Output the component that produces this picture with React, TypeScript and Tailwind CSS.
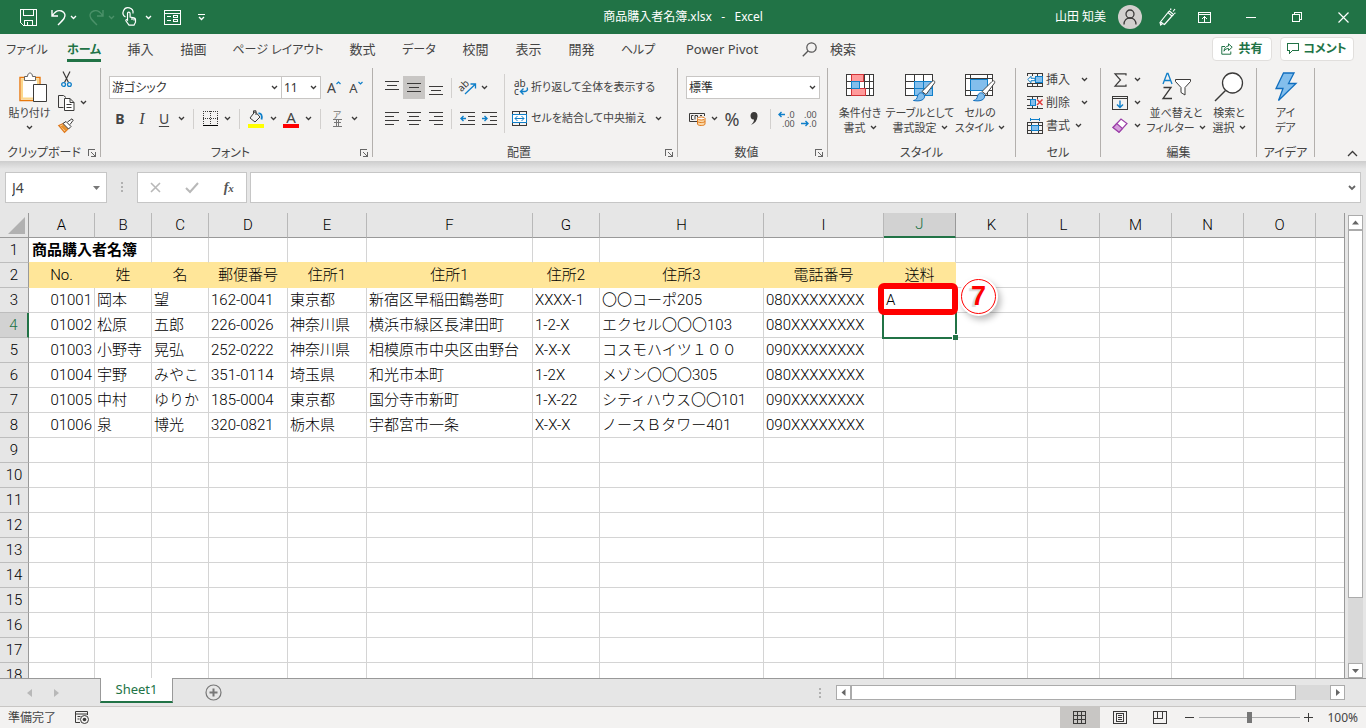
import type { ReactNode } from 'react'
import clsx from 'clsx'

const GREEN = '#217346'
const INK = '#3b3a39'
const BLUE = '#0f7fc9'

interface SvgProps {
  w: number
  h: number
  crisp?: boolean
  stroke?: string
  children: ReactNode
}

function Svg({ w, h, crisp, stroke = INK, children }: SvgProps) {
  return (
    <svg
      width={w}
      height={h}
      viewBox={`0 0 ${w} ${h}`}
      fill="none"
      stroke={stroke}
      shapeRendering={crisp ? 'crispEdges' : 'auto'}
      className="block shrink-0 overflow-visible"
      aria-hidden="true"
    >
      {children}
    </svg>
  )
}

function Chevron({ color = INK }: { color?: string }) {
  return (
    <Svg w={7} h={5} stroke={color}>
      <path d="M1 1l2.5 2.5L6 1" strokeWidth="1.3" />
    </Svg>
  )
}

/* ---------- title bar ---------- */

const SaveIcon = () => (
  <Svg w={17} h={17} crisp stroke="#fff">
    <path d="M.5.5h16v16H3.5l-3-3z M3.5.5v6h10v-6 M4.5 16.5v-5h8v5 M7.5 16v-3" />
  </Svg>
)

const UndoIcon = () => (
  <Svg w={15} h={17} stroke="#fff">
    <path d="M1 1v6h6 M1.5 6.5C4 2.5 7.5 1 10.5 2c3.5 1.3 4.5 4.5 2.5 7.5-1 1.5-3.5 4-6 6.5" strokeWidth="1.4" />
  </Svg>
)

const RedoIcon = () => (
  <Svg w={15} h={17} stroke="#4b9169">
    <path d="M14 1v6H8 M13.5 6.5C11 2.5 7.5 1 4.5 2 1 3.3 0 6.5 2 9.5c1 1.5 3.5 4 6 6.5" strokeWidth="1.4" />
  </Svg>
)

const TouchIcon = () => (
  <Svg w={14} h={18} stroke="#fff">
    <path d="M2.5 9A5 5 0 1 1 10 5.5" strokeWidth="1.2" />
    <path d="M4.5 12V5.5a1.3 1.3 0 0 1 2.6 0V9l4 .8c1 .3 1.4.9 1.4 1.8v2.6L11 17.2H6L3 13c-.6-1 .6-2 1.5-1z M9 10v2 M11 10.5v2" strokeWidth="1.2" />
  </Svg>
)

const FormIcon = () => (
  <Svg w={17} h={15} crisp stroke="#fff">
    <path d="M.5.5h16v14H.5z M.5 3.5h16 M3 6.5h4 M3 10.5h4 M9.5 5.5h4v2h-4z M9.5 9.5h4v2h-4z" />
  </Svg>
)

const CustomizeIcon = () => (
  <Svg w={9} h={8} stroke="#fff">
    <path d="M1 1.5h7" />
    <path d="M2 4l2.5 2.5L7 4" strokeWidth="1.3" />
  </Svg>
)

const PenIcon = () => (
  <Svg w={17} h={18} stroke="#fff">
    <path d="M1 14.5L9 4.5l4 3.5-7.5 8.5-2-1-1.8 1.5z M3.5 15.5L1.5 13.5 M9 4.5l1.5-1.5 4 3.5L13 8 M11.5 2l.5-1.5 M14 3.5l2-2.5 M15 5.5l1.5-.5" strokeWidth="1.2" />
  </Svg>
)

const RibbonDisplayIcon = () => (
  <Svg w={13} h={11} crisp stroke="#fff">
    <path d="M.5.5h12v10H.5z M.5 2.5h12 M6.5 4v6 M4 6.5h1 M8 6.5h1 M5 5.5h3" />
  </Svg>
)

function TitleBar() {
  return (
    <header className="grid h-[34px] shrink-0 grid-cols-[1fr_auto_1fr] items-center bg-[#217346] text-xs text-white">
      <div className="flex items-center pl-5">
        <button aria-label="上書き保存"><SaveIcon /></button>
        <button aria-label="元に戻す" className="ml-3.5"><UndoIcon /></button>
        <button aria-label="元に戻す一覧" className="ml-1"><Chevron color="#fff" /></button>
        <button aria-label="やり直し" className="ml-3"><RedoIcon /></button>
        <button aria-label="やり直し一覧" className="ml-1"><Chevron color="#4b9169" /></button>
        <button aria-label="タッチ" className="ml-2"><TouchIcon /></button>
        <button aria-label="タッチ一覧" className="ml-2"><Chevron color="#fff" /></button>
        <button aria-label="フォーム" className="ml-3"><FormIcon /></button>
        <button aria-label="カスタマイズ" className="ml-4"><CustomizeIcon /></button>
      </div>
      <h1 className="whitespace-pre">商品購入者名簿.xlsx   -   Excel</h1>
      <div className="flex items-center justify-end">
        <span>山田 知美</span>
        <span className="ml-3 flex size-6 items-center justify-center overflow-hidden rounded-full bg-[#d2d0ce]">
          <Svg w={14} h={16}>
            <circle cx="7" cy="5" r="4" strokeWidth="1.3" />
            <path d="M1 15.5c0-4 2.5-6.5 6-6.5s6 2.5 6 6.5" strokeWidth="1.3" />
          </Svg>
        </span>
        <button aria-label="近日公開の機能" className="ml-[17px]"><PenIcon /></button>
        <button aria-label="リボンの表示オプション" className="ml-[22px]"><RibbonDisplayIcon /></button>
        <button aria-label="最小化" className="ml-[17px] flex w-[46px] justify-center">
          <Svg w={10} h={10} crisp stroke="#fff"><path d="M0 5.5h10" /></Svg>
        </button>
        <button aria-label="元に戻す (縮小)" className="flex w-[46px] justify-center">
          <Svg w={10} h={10} crisp stroke="#fff"><path d="M.5 2.5h7v7h-7z M2.5 2V.5h7v7H8" /></Svg>
        </button>
        <button aria-label="閉じる" className="flex w-[46px] justify-center">
          <Svg w={11} h={11} stroke="#fff"><path d="M.5.5l10 10M10.5.5l-10 10" strokeWidth="1.2" /></Svg>
        </button>
      </div>
    </header>
  )
}

/* ---------- tabs ---------- */

const TABS = [
  { label: 'ファイル', width: 'w-[54px] text-xs' },
  { label: 'ホーム', width: 'w-[60px] text-xs', active: true },
  { label: '挿入', width: 'w-[53px]' },
  { label: '描画', width: 'w-[53px]' },
  { label: 'ページ レイアウト', width: 'w-[116px] text-xs' },
  { label: '数式', width: 'w-[53px]' },
  { label: 'データ', width: 'w-[60px] text-xs' },
  { label: '校閲', width: 'w-[53px]' },
  { label: '表示', width: 'w-[53px]' },
  { label: '開発', width: 'w-[53px]' },
  { label: 'ヘルプ', width: 'w-[60px] text-xs' },
  { label: 'Power Pivot', width: 'w-[108px]' },
]

function TabRow() {
  return (
    <nav className="flex h-[33px] shrink-0 items-start text-[13px] text-[#444]">
      {TABS.map(t => (
        <button key={t.label} className={clsx('flex h-7 shrink-0 justify-center', t.width)}>
          <span
            className={clsx(
              'h-7 whitespace-nowrap border-b-[3px] leading-[31px]',
              t.active ? 'border-[#217346] font-bold text-[#217346]' : 'border-transparent'
            )}
          >
            {t.label}
          </span>
        </button>
      ))}
      <button className="ml-[26px] flex h-7 items-center gap-[13px] pt-[3px]">
        <Svg w={15} h={15} stroke="#555">
          <circle cx="9.5" cy="5.5" r="4.7" strokeWidth="1.2" />
          <path d="M6 9L.8 14.3" strokeWidth="1.3" />
        </Svg>
        検索
      </button>
      <div className="ml-auto mr-3 mt-[3px] flex gap-2 text-xs font-bold text-[#217346]">
        <button className="flex h-6 w-[60px] items-center justify-center gap-[5px] rounded-sm border border-[#e1dfdd] bg-white">
          <Svg w={12} h={12} stroke={GREEN}>
            <path d="M4 3.5H.8v7.7h9V8.5 M7.5.8l3.7 3.4-3.7 3.3V5.5C5.5 5.5 4 6.5 3 8.2c.2-3.2 2-5 4.5-5.2z" />
          </Svg>
          共有
        </button>
        <button className="flex h-6 w-[74px] items-center justify-center gap-1 rounded-sm border border-[#e1dfdd] bg-white">
          <Svg w={12} h={12} crisp stroke={GREEN}>
            <path d="M.5.5h11v7h-6l-3 3v-3h-2z" />
          </Svg>
          コメント
        </button>
      </div>
    </nav>
  )
}

/* ---------- ribbon icons ---------- */

const PasteIcon = () => (
  <Svg w={28} h={31}>
    <path d="M1 5.5h20v23H1z" fill="#fff" stroke="#e8780c" strokeWidth="1.4" />
    <path d="M3 7.5h16v19H3z" stroke="#fbd78c" strokeWidth="2" />
    <path d="M5.5 8.5V4.5h3C8.5 2 10 1 11 1s2.500 1 2.500 3.500h3v4z" fill="#fff" stroke="#666" />
    <path d="M14.500 12.500h13v17h-13z" fill="#fff" />
  </Svg>
)

const CutIcon = () => (
  <Svg w={11} h={17}>
    <path d="M2 .5l5.5 11 M9 .5l-5.5 11" strokeWidth="1.2" />
    <circle cx="2.6" cy="13.5" r="1.9" stroke={BLUE} strokeWidth="1.3" />
    <circle cx="8.4" cy="13.5" r="1.9" stroke={BLUE} strokeWidth="1.3" />
  </Svg>
)

const CopyIcon = () => (
  <Svg w={17} h={16}>
    <path d="M5.5 12.5h-5v-12h5l2.5 2" />
    <path d="M6.5 3.5h5.5l4 4v8h-9.5z M12 3.5v4h4 M8.5 9.5h5 M8.5 12.5h5" fill="#fff" />
  </Svg>
)

const BrushIcon = () => (
  <Svg w={16} h={15}>
    <path d="M.8 7.5l4.7-2 5 5-4 3.8z" fill="#fbd9a8" stroke="#e07b1f" strokeWidth="1.3" />
    <path d="M2.500 8.500l5 4.500 2-2-4-4.500z" fill="#e8912d" stroke="none" />
    <path d="M5 5.5l3-2 5 5-2.5 2.5z M9.5 4L14 .8l1.2 1.4L12 6.5" fill="#fff" />
  </Svg>
)

const BorderIcon = () => (
  <Svg w={15} h={15} crisp>
    <path d="M0 .5h15 M.5 0v14 M14.5 0v14 M7.5 0v14 M0 7.5h15" strokeDasharray="1 1" />
    <path d="M0 14.5h15" stroke="#000" />
  </Svg>
)

const FillIcon = () => (
  <Svg w={16} h={18}>
    <path d="M7 1.5L2 8l5 4 5-5z M5.5 4V.8H8V5" />
    <path d="M10.5 3.5c2.5-.5 4 1.5 3 6" stroke={BLUE} strokeWidth="1.8" />
    <path d="M0 14h16v4H0z" fill="#ff0" stroke="none" />
  </Svg>
)

function Lines({ rows }: { rows: [number, number][] }) {
  return (
    <Svg w={14} h={15} crisp>
      {rows.map(([x1, x2], i) => (
        <path key={i} d={`M${x1} ${i * 4 + 1.5}H${x2}`} />
      ))}
    </Svg>
  )
}

function VLines({ top }: { top: number }) {
  return (
    <Svg w={14} h={17} crisp>
      <path d={`M0 ${top + 0.5}h14 M2 ${top + 4.5}h10 M0 ${top + 8.5}h14`} />
    </Svg>
  )
}

const OrientationIcon = () => (
  <Svg w={17} h={17}>
    <path d="M6 15L16 5.5 M11.5 5h5v4.5" stroke={BLUE} strokeWidth="1.3" />
    <text x="0" y="11" fontSize="10" fill={INK} stroke="none" transform="rotate(-45 4 9)">ab</text>
  </Svg>
)

function IndentIcon({ out }: { out?: boolean }) {
  return (
    <Svg w={15} h={14} crisp>
      <path d="M0 .5h15 M8 4.5h7 M8 8.5h7 M0 12.5h15" />
      <path d={out ? 'M1 6.5h5 M3.5 4L1 6.5 3.5 9' : 'M0 6.5h5 M2.5 4L5 6.5 2.5 9'} stroke={BLUE} shapeRendering="auto" strokeWidth="1.4" />
    </Svg>
  )
}

const WrapIcon = () => (
  <Svg w={15} h={17}>
    <text x="0" y="8" fontSize="10" fill={INK} stroke="none">ab</text>
    <text x="0" y="16" fontSize="10" fill={INK} stroke="none">c</text>
    <path d="M13 8.5c1.5 2.5-.5 4-2 4H7 M9.5 9.5l-3 3 3 3" stroke={BLUE} strokeWidth="1.4" />
  </Svg>
)

const MergeIcon = () => (
  <Svg w={15} h={15} crisp>
    <path d="M.5.5h14v14H.5z M7.5 0v3 M7.5 12v3" />
    <path d="M.5 3.5h14v8H.5z" fill="#fff" stroke={BLUE} />
    <path d="M3 7.5h9 M5.5 5L3 7.5 5.5 10 M9.5 5L12 7.5 9.5 10" stroke={BLUE} shapeRendering="auto" />
  </Svg>
)

const CurrencyIcon = () => (
  <Svg w={17} h={14}>
    <path d="M8 9.5H.5v-8h15V4 M4.5 3.5h-2v4h2 M6 7.5v-4h2.5v2 M13 3.5h-2" />
    <path d="M8.5 6.5V12c0 2 7.5 2 7.5 0V6.5" fill="#fbd9a8" stroke="#e07b1f" />
    <ellipse cx="12.25" cy="6.5" rx="3.7" ry="1.5" fill="#fff" stroke="#e07b1f" />
    <path d="M8.5 9.2c0 1.8 7.5 1.8 7.5 0" stroke="#e07b1f" />
  </Svg>
)

function DecimalIcon({ inc }: { inc?: boolean }) {
  return (
    <Svg w={16} h={16}>
      {inc ? (
        <>
          <path d="M0 3.5h6 M2.5 1L0 3.5 2.5 6" stroke={BLUE} strokeWidth="1.4" />
          <text x="8" y="7" fontSize="9" fill="#555" stroke="none">.0</text>
          <text x="3" y="16" fontSize="9" fill="#555" stroke="none">.00</text>
        </>
      ) : (
        <>
          <path d="M0 12.5h7 M4.5 10L7 12.5 4.5 15" stroke={BLUE} strokeWidth="1.4" />
          <text x="3" y="7" fontSize="9" fill="#555" stroke="none">.00</text>
          <text x="8" y="16" fontSize="9" fill="#555" stroke="none">.0</text>
        </>
      )}
    </Svg>
  )
}

const ConditionalIcon = () => (
  <Svg w={28} h={23} crisp>
    <path d="M.5.5h27v21H.5z" fill="#fff" />
    <path d="M5.5 0v22 M18.5 0v22 M23.5 0v22 M0 7.5h28 M0 14.5h28" />
    <path d="M5.5.5h12v7h-12z M5.5 14.5h14v7h-14z" fill="#ff9a9a" stroke="#d13438" />
    <path d="M5.5 7.5h8v7h-8z" fill="#83beec" stroke={BLUE} />
  </Svg>
)

function PaintBrush() {
  return (
    <>
      <path d="M17 17.5L27 7.5c1.5-1.5 3.5-.5 2.5 1.5L21 20.5z" fill="#fff" stroke="#444" />
      <path d="M8.5 26.5c3-.5 3.5-2 4-4.5.8-3 3.5-4 5.5-2.5 2.5 2 2 5-1 6.5-2.5 1.2-5.5 1-8.5.5z" fill="#83beec" stroke="#106ebe" />
    </>
  )
}

const TableIcon = () => (
  <Svg w={31} h={28}>
    <g shapeRendering="crispEdges">
      <path d="M.5.5h27v21H.5z" fill="#fff" />
      <path d="M9.5 7.5h18v14h-18z" fill="#83beec" stroke={BLUE} />
      <path d="M9.5 0v7 M18.5 0v7 M0 7.5h9 M0 14.5h9" />
      <path d="M9.5 14.5h18 M18.5 7.5v14" stroke={BLUE} />
    </g>
    <PaintBrush />
  </Svg>
)

const CellStyleIcon = () => (
  <Svg w={31} h={28}>
    <g shapeRendering="crispEdges">
      <path d="M.5.5h27v21H.5z" fill="#fff" />
      <path d="M5.5 0v22 M22.5 0v22 M0 4.5h28 M0 16.5h28" />
      <path d="M5.5 5.5h17v11h-17z" fill="#83beec" stroke={BLUE} />
    </g>
    <PaintBrush />
  </Svg>
)

const CellInsertIcon = () => (
  <Svg w={16} h={14}>
    <g shapeRendering="crispEdges">
      <path d="M.5 3V.5h15v13H.5V11 M5.5 0v3 M10.5 0v14 M5.5 10v4 M0 10.5h16 M8 3.5h8" />
      <path d="M8 3.5h7.5v6H8z" fill="#83beec" stroke={BLUE} />
    </g>
    <path d="M.8 6.5L4 3.3v2h4v2.4H4v2z" fill="#fff" stroke={BLUE} />
  </Svg>
)

const CellDeleteIcon = () => (
  <Svg w={16} h={14}>
    <g shapeRendering="crispEdges">
      <path d="M0 .5h16 M0 12.5h16 M5.5 0v3 M10.5 0v3 M5.5 10v3 M10.5 10v3 M0 3.5h4v6H0" />
      <path d="M3.5 3.5h5v6h-5z" fill="#83beec" stroke={BLUE} />
    </g>
    <path d="M10 3.5L15.5 9 M15.5 3.5L10 9" stroke="#e03c3c" strokeWidth="1.5" />
  </Svg>
)

const CellFormatIcon = () => (
  <Svg w={16} h={16} crisp>
    <path d="M3 1.5h10 M3.5 0v3 M12.5 0v3" stroke={BLUE} />
    <path d="M.5 4.5h15v11H.5z M4.5 4v12 M11.5 4v12 M0 7.5h16 M0 12.5h16" />
    <path d="M4.5 7.5h7v5h-7z" fill="#83beec" stroke={BLUE} />
  </Svg>
)

const SumIcon = () => (
  <Svg w={13} h={14}>
    <path d="M12 2.5V.8H1L6.5 7 1 13.2h11v-1.7" strokeWidth="1.2" />
  </Svg>
)

const FillDownIcon = () => (
  <Svg w={16} h={14} crisp>
    <path d="M.5.5h15v13H.5z M.5 2.5h15" />
    <path d="M8 4.5v7 M5 8.5l3 3 3-3" stroke={BLUE} strokeWidth="1.4" shapeRendering="auto" />
  </Svg>
)

const EraserIcon = () => (
  <Svg w={16} h={15}>
    <path d="M1 9.5L9 1l6 4.5-8 8.8z" fill="#fff" stroke="#9b3fa8" strokeWidth="1.2" />
    <path d="M1 9.5l3.8-4 5.7 5L7 14.3z" fill="#d59ddb" stroke="#9b3fa8" strokeWidth="1.2" />
  </Svg>
)

const SortIcon = () => (
  <Svg w={29} h={28}>
    <path d="M1 12L5 1.5h1L10 12 M2.5 8.5h6" stroke={BLUE} strokeWidth="1.3" />
    <path d="M1.5 15.5H9l-8 11h9" strokeWidth="1.3" />
    <path d="M13.500 7.500h15v2l-5.500 6V23l-4-2.500v-5l-5.500-6z" fill="#fff" />
  </Svg>
)

const FindIcon = () => (
  <Svg w={30} h={30}>
    <circle cx="18.5" cy="11" r="10" fill="#fff" strokeWidth="1.3" />
    <path d="M11.5 18.5L1 29" strokeWidth="1.5" />
  </Svg>
)

const IdeaIcon = () => (
  <Svg w={22} h={30}>
    <path d="M8.5 1H19l-5.5 10.500H21L3.500 28.500 8 16.500H1z" fill="#83beec" stroke="#106ebe" strokeWidth="1.3" />
  </Svg>
)

const LauncherIcon = () => (
  <Svg w={8} h={8} crisp stroke="#666">
    <path d="M.5 7V.5H7 M7.5 3v4.5H3 M3 3l4 4" />
  </Svg>
)

/* ---------- ribbon ---------- */

function Group({ label, width, launcher, children }: { label: string; width: string; launcher?: boolean; children: ReactNode }) {
  return (
    <section className={clsx('mb-1 mt-px flex shrink-0 flex-col border-r border-[#b3b0ad]', width)}>
      <div className="flex flex-1">{children}</div>
      <div className="-mb-1 flex h-4 items-center leading-4">
        <span className="flex-1 whitespace-nowrap text-center">{label}</span>
        {launcher && (
          <button aria-label={`${label}の設定`} className="mr-0.5 w-2.5"><LauncherIcon /></button>
        )}
      </div>
    </section>
  )
}

function Tool({ label, active, children }: { label: string; active?: boolean; children: ReactNode }) {
  return (
    <button aria-label={label} className={clsx('flex h-[23px] w-[22px] shrink-0 items-center justify-center', active && 'bg-[#c8c6c4]')}>
      {children}
    </button>
  )
}

function More({ label }: { label: string }) {
  return (
    <button aria-label={`${label}のオプション`} className="flex h-[23px] w-[13px] shrink-0 items-center justify-center">
      <Chevron />
    </button>
  )
}

function Sep({ tight }: { tight?: boolean }) {
  return <span className={clsx('h-5 w-px shrink-0 bg-[#d2d0ce]', tight ? 'mx-1' : 'mx-[5px]')} />
}

interface BigButtonProps {
  icon: ReactNode
  lines: string[]
  more?: boolean
  width: string
}

function BigButton({ icon, lines, more, width }: BigButtonProps) {
  return (
    <button className={clsx('flex h-[68px] shrink-0 flex-col items-center pt-1 text-[11px] leading-[15px]', width)}>
      <span className="flex h-[33px] items-start justify-center">{icon}</span>
      {lines.map((l, i) => (
        <span key={i} className="flex h-[15px] items-center gap-1 whitespace-nowrap">
          {l}
          {more && i === lines.length - 1 && <Chevron />}
        </span>
      ))}
    </button>
  )
}

function Combo({ label, value, width }: { label: string; value: string; width: string }) {
  return (
    <div className={clsx('relative h-[23px] shrink-0 border border-[#c8c6c4] bg-white', width)}>
      <select aria-label={label} defaultValue={value} className="h-full w-full appearance-none bg-transparent pl-0.5 text-xs leading-5 text-[#333]">
        <option>{value}</option>
      </select>
      <span className="pointer-events-none absolute inset-y-0 right-[3px] flex items-center"><Chevron /></span>
    </div>
  )
}

function Ribbon() {
  return (
    <div className="flex h-[94px] shrink-0 text-xs text-[#444]">
      <Group label="クリップボード" width="w-[101px]" launcher>
        <BigButton icon={<span className="pl-1.5"><PasteIcon /></span>} lines={['貼り付け', '']} more width="w-[51px] ml-1" />
        <div className="flex flex-col">
          <div className="flex h-[23px]"><Tool label="切り取り"><CutIcon /></Tool></div>
          <div className="flex h-[23px]"><Tool label="コピー"><CopyIcon /></Tool><More label="コピー" /></div>
          <div className="flex h-[23px]"><Tool label="書式のコピー"><BrushIcon /></Tool></div>
        </div>
      </Group>

      <Group label="フォント" width="w-[272px]" launcher>
        <div className="flex flex-col gap-2 pl-2 pt-2">
          <div className="flex items-center">
            <Combo label="フォント名" value="游ゴシック" width="w-[173px]" />
            <Combo label="フォント サイズ" value="11" width="w-[40px] -ml-px" />
            <span className="ml-0.5 flex">
              <Tool label="フォント サイズの拡大">
                <span className="text-sm leading-4">A</span>
                <Svg w={5} h={14} stroke={BLUE}><path d="M.5 3l2-2 2 2" strokeWidth="1.2" /></Svg>
              </Tool>
              <Tool label="フォント サイズの縮小">
                <span className="text-[13px] leading-4">A</span>
                <Svg w={5} h={14} stroke={BLUE}><path d="M.5 1l2 2 2-2" strokeWidth="1.2" /></Svg>
              </Tool>
            </span>
          </div>
          <div className="flex items-center">
            <Tool label="太字"><b className="text-sm leading-4">B</b></Tool>
            <Tool label="斜体"><i className="font-['Liberation_Serif'] text-base leading-4">I</i></Tool>
            <Tool label="下線"><u className="text-sm leading-4 underline-offset-2">U</u></Tool>
            <More label="下線" />
            <Sep />
            <Tool label="罫線"><BorderIcon /></Tool>
            <More label="罫線" />
            <Sep />
            <Tool label="塗りつぶしの色"><FillIcon /></Tool>
            <More label="塗りつぶしの色" />
            <Tool label="フォントの色">
              <span className="h-[18px] w-4 border-b-4 border-[#f00] text-center text-[15px] leading-[14px]">A</span>
            </Tool>
            <More label="フォントの色" />
            <Sep />
            <Tool label="ふりがな">
              <span className="flex flex-col items-center text-[#777]">
                <span className="text-[9px] leading-[9px]">ア</span>
                <Svg w={9} h={8} crisp stroke="#777"><path d="M0 .5h9 M3.5 0v7 M5.5 0v7 M1 3.5h7 M0 7.5h9" /></Svg>
              </span>
            </Tool>
            <More label="ふりがな" />
          </div>
        </div>
      </Group>

      <Group label="配置" width="w-[305px]" launcher>
        <div className="flex flex-col gap-2 pl-2 pt-2">
          <div className="flex items-center">
            <Tool label="上揃え"><VLines top={2} /></Tool>
            <Tool label="上下中央揃え" active><VLines top={4} /></Tool>
            <Tool label="下揃え"><VLines top={7} /></Tool>
            <Sep tight />
            <Tool label="方向"><OrientationIcon /></Tool>
            <More label="方向" />
          </div>
          <div className="flex items-center">
            <Tool label="左揃え"><Lines rows={[[0, 14], [0, 9], [0, 14], [0, 9]]} /></Tool>
            <Tool label="中央揃え"><Lines rows={[[0, 14], [2, 12], [0, 14], [2, 12]]} /></Tool>
            <Tool label="右揃え"><Lines rows={[[0, 14], [5, 14], [0, 14], [5, 14]]} /></Tool>
            <Sep tight />
            <Tool label="インデントを減らす"><IndentIcon out /></Tool>
            <Tool label="インデントを増やす"><IndentIcon /></Tool>
          </div>
        </div>
        <span className="ml-1 mt-1.5 h-[59px] w-px shrink-0 bg-[#d2d0ce]" />
        <div className="flex flex-col gap-2 pl-[7px] pt-2 text-[11px]">
          <button className="flex h-[23px] items-center gap-0.5 whitespace-nowrap pl-0.5">
            <WrapIcon />折り返して全体を表示する
          </button>
          <div className="flex">
            <button className="flex h-[23px] items-center gap-1 whitespace-nowrap">
              <MergeIcon />セルを結合して中央揃え
            </button>
            <span className="ml-1.5"><More label="セルの結合" /></span>
          </div>
        </div>
      </Group>

      <Group label="数値" width="w-[150px]" launcher>
        <div className="flex flex-col gap-2 pl-2 pt-2">
          <Combo label="表示形式" value="標準" width="w-[134px]" />
          <div className="flex items-center">
            <Tool label="通貨表示形式"><CurrencyIcon /></Tool>
            <More label="通貨表示形式" />
            <Tool label="パーセント スタイル"><span className="text-lg leading-4">%</span></Tool>
            <Tool label="桁区切りスタイル">
              <Svg w={8} h={13} stroke="none">
                <path d="M4 0c2.5 0 3.8 1.8 3.5 4.5C7.2 8.5 5 11.5 1 13c2-2 3-3.5 3-5.5C1.8 7.8.5 6 .5 3.8.5 1.5 2 0 4 0z" fill={INK} />
              </Svg>
            </Tool>
            <Sep />
            <Tool label="小数点以下の表示桁数を増やす"><DecimalIcon inc /></Tool>
            <Tool label="小数点以下の表示桁数を減らす"><DecimalIcon /></Tool>
          </div>
        </div>
      </Group>

      <Group label="スタイル" width="w-[188px]">
        <BigButton icon={<span className="pt-0.5"><ConditionalIcon /></span>} lines={['条件付き', '書式']} more width="w-[60px] ml-0.5" />
        <BigButton icon={<span className="pt-0.5"><TableIcon /></span>} lines={['テーブルとして', '書式設定']} more width="w-[60px]" />
        <BigButton icon={<span className="pt-0.5"><CellStyleIcon /></span>} lines={['セルの', 'スタイル']} more width="w-[60px]" />
      </Group>

      <Group label="セル" width="w-[85px]">
        <div className="flex flex-col pl-[11px]">
          <button className="flex h-[23px] items-center gap-[3px]"><CellInsertIcon />挿入<span className="ml-2"><Chevron /></span></button>
          <button className="flex h-[23px] items-center gap-[3px]"><CellDeleteIcon />削除<span className="ml-2"><Chevron /></span></button>
          <button className="flex h-[23px] items-center gap-[3px]"><CellFormatIcon />書式<span className="ml-0.5"><Chevron /></span></button>
        </div>
      </Group>

      <Group label="編集" width="w-[156px]">
        <div className="flex flex-col pl-2">
          <div className="flex"><Tool label="オート SUM"><SumIcon /></Tool><More label="オート SUM" /></div>
          <div className="flex"><Tool label="フィル"><FillDownIcon /></Tool><More label="フィル" /></div>
          <div className="flex"><Tool label="クリア"><EraserIcon /></Tool><More label="クリア" /></div>
        </div>
        <BigButton icon={<SortIcon />} lines={['並べ替えと', 'フィルター']} more width="w-[60px] ml-0.5" />
        <BigButton icon={<FindIcon />} lines={['検索と', '選択']} more width="w-[46px]" />
      </Group>

      <Group label="アイデア" width="w-[58px]">
        <BigButton icon={<IdeaIcon />} lines={['アイ', 'デア']} width="w-full" />
      </Group>

      <button aria-label="リボンを折りたたむ" className="mb-1 ml-auto mr-2 self-end">
        <Svg w={11} h={7}><path d="M1 6l4.5-4.5L10 6" strokeWidth="1.3" /></Svg>
      </button>
    </div>
  )
}

/* ---------- formula bar ---------- */

function Dots() {
  return (
    <span className="flex w-0.5 flex-col gap-0.5">
      <i className="size-0.5 bg-[#b1b1b1]" />
      <i className="size-0.5 bg-[#b1b1b1]" />
      <i className="size-0.5 bg-[#b1b1b1]" />
    </span>
  )
}

function FormulaBar() {
  return (
    <div className="shrink-0 bg-[#e6e6e6]">
      <div className="h-2 bg-linear-to-b from-[#cdcdcd] to-[#e6e6e6]" />
      <div className="flex h-[44px] items-start px-[5px] pb-[10px] pt-[3px]">
        <div className="flex h-[31px] w-[102px] shrink-0 items-center border border-[#c6c6c6] bg-white pr-1.5">
          <input aria-label="名前ボックス" defaultValue="J4" className="h-full w-0 flex-1 pl-1.5 text-sm text-[#444] outline-none" />
          <button aria-label="名前ボックスの一覧">
            <Svg w={7} h={4} stroke="none"><path d="M0 0h7L3.5 4z" fill="#777" /></Svg>
          </button>
        </div>
        <span className="flex h-[29px] w-[30px] items-center justify-center"><Dots /></span>
        <div className="flex h-[31px] w-[110px] shrink-0 items-center justify-around border border-[#c6c6c6] bg-white">
          <button aria-label="キャンセル"><Svg w={11} h={11} stroke="#b8b8b8"><path d="M1 1l9 9M10 1l-9 9" strokeWidth="1.6" /></Svg></button>
          <button aria-label="入力"><Svg w={14} h={11} stroke="#b8b8b8"><path d="M1 6l4 4L13 1" strokeWidth="2" /></Svg></button>
          <button aria-label="関数の挿入" className="font-['Liberation_Serif'] text-sm font-bold italic leading-4 text-[#555]">
            f<span className="text-[11px]">x</span>
          </button>
        </div>
        <div className="ml-[3px] flex h-[31px] flex-1 items-center border border-[#c6c6c6] bg-white pr-1">
          <input aria-label="数式バー" className="h-full w-0 flex-1 px-2 text-sm outline-none" />
          <button aria-label="数式バーの展開">
            <Svg w={8} h={6} stroke="#666"><path d="M1 1l3 3 3-3" strokeWidth="1.8" /></Svg>
          </button>
        </div>
      </div>
    </div>
  )
}

/* ---------- sheet ---------- */

const COLUMNS = [
  { name: 'A', width: 'w-[66px]' },
  { name: 'B', width: 'w-[57px]' },
  { name: 'C', width: 'w-[57px]' },
  { name: 'D', width: 'w-[79px]' },
  { name: 'E', width: 'w-[79px]' },
  { name: 'F', width: 'w-[166px]' },
  { name: 'G', width: 'w-[67px]' },
  { name: 'H', width: 'w-[164px]' },
  { name: 'I', width: 'w-[120px]' },
  { name: 'J', width: 'w-[72px]' },
  { name: 'K', width: 'w-[72px]' },
  { name: 'L', width: 'w-[72px]' },
  { name: 'M', width: 'w-[72px]' },
  { name: 'N', width: 'w-[72px]' },
  { name: 'O', width: 'w-[72px]' },
  { name: '', width: '' },
]

const HEADINGS = ['No.', '姓', '名', '郵便番号', '住所1', '住所1', '住所2', '住所3', '電話番号', '送料']

const PEOPLE = [
  ['01001', '岡本', '望', '162-0041', '東京都', '新宿区早稲田鶴巻町', 'XXXX-1', '〇〇コーポ205', '080XXXXXXXX', 'A'],
  ['01002', '松原', '五郎', '226-0026', '神奈川県', '横浜市緑区長津田町', '1-2-X', 'エクセル〇〇〇103', '080XXXXXXXX'],
  ['01003', '小野寺', '晃弘', '252-0222', '神奈川県', '相模原市中央区由野台', 'X-X-X', 'コスモハイツ１００', '090XXXXXXXX'],
  ['01004', '宇野', 'みやこ', '351-0114', '埼玉県', '和光市本町', '1-2X', 'メゾン〇〇〇305', '080XXXXXXXX'],
  ['01005', '中村', 'ゆりか', '185-0004', '東京都', '国分寺市新町', '1-X-22', 'シティハウス〇〇101', '090XXXXXXXX'],
  ['01006', '泉', '博光', '320-0821', '栃木県', '宇都宮市一条', 'X-X-X', 'ノースＢタワー401', '090XXXXXXXX'],
]

const ROW_COUNT = 18

// Frame and step number that sit over J3
function Callout() {
  return (
    <>
      <span className="absolute -bottom-[3px] -left-1.5 -right-[3px] -top-[5px] z-20 rounded-md border-[6px] border-[#f00]" />
      <span className="absolute left-[75px] top-[-11px] z-20 flex size-[39px] items-center justify-center rounded-full bg-white shadow-[3px_4px_6px_rgba(0,0,0,0.25)]">
        <span className="flex size-[35px] items-center justify-center rounded-full border border-[#f00] font-['Liberation_Sans'] text-[27px] font-bold leading-none text-[#f00] [text-shadow:-3px_2px_1px_#ddd]">
          7
        </span>
      </span>
    </>
  )
}

function Selection() {
  return (
    <span className="absolute -inset-0.5 z-10 border-2 border-[#217346]">
      <i className="absolute -bottom-[3px] -right-[3px] size-1.5 border-l border-t border-white bg-[#217346]" />
    </span>
  )
}

function SheetRow({ row }: { row: number }) {
  const data = row === 2 ? HEADINGS : PEOPLE[row - 3]
  const current = row === 4
  return (
    <tr>
      <th
        scope="row"
        className={clsx(
          'h-[25px] border-b border-b-[#bdbdbd] p-0 text-center font-light leading-6',
          current ? 'border-r-2 border-r-[#217346] bg-[#d2d2d2] text-[#217346]' : 'border-r border-r-[#999] bg-[#e6e6e6] text-black'
        )}
      >
        {row}
      </th>
      {COLUMNS.map((c, i) => {
        if (row === 1 && i === 1) return null
        const filled = row === 2 && i < 10
        return (
          <td
            key={i}
            colSpan={row === 1 && i === 0 ? 2 : 1}
            className={clsx(
              'relative h-[25px] whitespace-nowrap border-b border-r px-0.5 py-0 leading-6 last:border-r-0',
              filled ? 'border-[#ffe699] bg-[#ffe699] text-center' : 'border-[#d4d4d4]',
              row === 1 && i < 10 && 'border-b-[#ffe699]',
              row === 1 && i === 0 && 'pl-[3px] font-bold',
              row > 2 && i === 0 && 'text-right'
            )}
          >
            {row === 1 && i === 0 ? '商品購入者名簿' : data?.[i]}
            {row === 3 && c.name === 'J' && <Callout />}
            {row === 4 && c.name === 'J' && <Selection />}
          </td>
        )
      })}
    </tr>
  )
}

function ScrollArrow({ label, d, className }: { label: string; d: string; className?: string }) {
  return (
    <button aria-label={label} className={clsx('flex size-[15px] shrink-0 items-center justify-center border border-[#ababab] bg-white', className)}>
      <Svg w={7} h={7} stroke="none"><path d={d} fill="#666" /></Svg>
    </button>
  )
}

function Sheet() {
  return (
    <div className="flex min-h-0 flex-1 bg-[#e6e6e6]">
      <div className="min-w-0 flex-1 overflow-hidden border-r border-[#999]">
        <table className="w-full table-fixed border-separate border-spacing-0 bg-white font-['Roboto','Noto_Sans_CJK_JP',sans-serif] text-[15px] font-light text-black [font-feature-settings:normal]">
          <colgroup>
            <col className="w-[29px]" />
            {COLUMNS.map((c, i) => <col key={i} className={c.width} />)}
          </colgroup>
          <thead>
            <tr>
              <th aria-label="すべて選択" className="h-[25px] border-b border-r border-[#999] bg-[#e6e6e6] p-0">
                <span className="flex justify-end pr-[3px]">
                  <Svg w={17} h={17} stroke="none"><path d="M17 0v17H0z" fill="#b1b1b1" /></Svg>
                </span>
              </th>
              {COLUMNS.map((c, i) => (
                <th
                  key={i}
                  scope="col"
                  className={clsx(
                    'h-[25px] border-r p-0 text-center font-light last:border-r-0',
                    c.name === 'J'
                      ? 'border-b-2 border-b-[#217346] border-r-[#999] bg-[#d2d2d2] leading-[23px] text-[#217346]'
                      : 'border-b border-b-[#999] border-r-[#b8b8b8] bg-[#e6e6e6] leading-6 text-black'
                  )}
                >
                  {c.name}
                </th>
              ))}
            </tr>
          </thead>
          <tbody>
            {Array.from({ length: ROW_COUNT }, (_, i) => <SheetRow key={i} row={i + 1} />)}
          </tbody>
        </table>
      </div>
      <div className="flex w-[21px] shrink-0 flex-col items-center pt-0.5">
        <ScrollArrow label="上へスクロール" d="M0 5.5h7l-3.5-4z" />
        <div className="flex w-[15px] flex-1 flex-col bg-[#d9d9d9]">
          <div className="h-[85%] border border-[#ababab] bg-white" />
        </div>
        <ScrollArrow label="下へスクロール" d="M0 2h7L3.5 6z" />
      </div>
    </div>
  )
}

function SheetTabs() {
  return (
    <div className="flex h-7 shrink-0 items-start border-t border-[#999] bg-[#e6e6e6]">
      <div className="flex h-[27px] w-[100px] shrink-0 items-center gap-[22px] pl-[27px]">
        <button aria-label="前のシート"><Svg w={5} h={8} stroke="none"><path d="M5 0v8L0 4z" fill="#b8b8b8" /></Svg></button>
        <button aria-label="次のシート"><Svg w={5} h={8} stroke="none"><path d="M0 0v8l5-4z" fill="#b8b8b8" /></Svg></button>
      </div>
      <button className="-mt-px h-[25px] w-[73px] shrink-0 border-x border-b-2 border-x-[#999] border-b-[#217346] bg-white text-[13px] leading-[23px] text-[#217346]">
        Sheet1
      </button>
      <button aria-label="新しいシート" className="ml-8 mt-[5px]">
        <Svg w={17} h={17} stroke="#777">
          <circle cx="8.5" cy="8.5" r="7.5" strokeWidth="1.2" />
          <path d="M8.5 4.5v8M4.5 8.5h8" strokeWidth="2" />
        </Svg>
      </button>
      <div className="ml-auto flex h-[27px] w-[547px] items-center">
        <Dots />
        <ScrollArrow label="左へスクロール" d="M5.5 0v7l-4-3.5z" className="ml-[15px]" />
        <div className="flex h-[15px] flex-1 bg-[#d9d9d9]">
          <div className="w-[93%] border border-[#ababab] bg-white" />
        </div>
        <ScrollArrow label="右へスクロール" d="M2 0v7l4-3.5z" className="mr-[21px]" />
      </div>
    </div>
  )
}

/* ---------- status bar ---------- */

const VIEWS = [
  { label: '標準', d: 'M.5.5h12v12H.5z M4.5 0v13 M8.5 0v13 M0 4.5h13 M0 8.5h13', active: true },
  { label: 'ページ レイアウト', d: 'M.5.5h13v12H.5z M3.5 2.5h7v8h-7z M5 4.5h4 M5 6.5h4 M5 8.5h4' },
  { label: '改ページ プレビュー', d: 'M.5.5h13v12H.5z M4.5 0v7 M9.5 0v7 M0 7.5h10' },
]

function StatusBar() {
  return (
    <footer className="flex h-[22px] shrink-0 items-center border-t border-[#c8c6c4] bg-[#f3f2f1] text-xs text-[#444]">
      <span className="pl-2">準備完了</span>
      <button aria-label="マクロの記録" className="ml-[19px]">
        <Svg w={15} h={14}>
          <path d="M5 11.5H.5V.5h12V4 M.5 3h12 M2.5 5.5h3 M2.5 8h2" />
          <circle cx="9.5" cy="8.5" r="4" />
          <circle cx="9.5" cy="8.5" r="1.8" fill={INK} stroke="none" />
        </Svg>
      </button>
      <div className="ml-auto flex h-full">
        {VIEWS.map(v => (
          <button key={v.label} aria-label={v.label} className={clsx('flex w-10 items-center justify-center', v.active && 'bg-[#c8c6c4]')}>
            <Svg w={14} h={13} crisp><path d={v.d} /></Svg>
          </button>
        ))}
      </div>
      <button aria-label="縮小" className="ml-[5px]">
        <Svg w={9} h={9} crisp><path d="M0 4.5h9" /></Svg>
      </button>
      <input
        type="range"
        aria-label="ズーム"
        min={0}
        max={100}
        defaultValue={50}
        className="ml-[5px] h-3 w-[101px] appearance-none bg-transparent bg-linear-to-b from-[#ababab] to-[#ababab] bg-[length:100%_1px] bg-center bg-no-repeat [&::-webkit-slider-thumb]:h-[11px] [&::-webkit-slider-thumb]:w-[5px] [&::-webkit-slider-thumb]:appearance-none [&::-webkit-slider-thumb]:bg-[#777]"
      />
      <button aria-label="拡大" className="ml-1">
        <Svg w={9} h={9} crisp><path d="M0 4.5h9M4.5 0v9" /></Svg>
      </button>
      <span className="ml-3 mr-2 w-[33px] text-right">100%</span>
    </footer>
  )
}

export default function App() {
  return (
    <div className="flex h-screen flex-col overflow-hidden bg-[#f3f2f1] font-['Noto_Sans','Noto_Sans_CJK_JP',sans-serif] [font-feature-settings:'palt']">
      <TitleBar />
      <TabRow />
      <Ribbon />
      <FormulaBar />
      <Sheet />
      <SheetTabs />
      <StatusBar />
    </div>
  )
}
